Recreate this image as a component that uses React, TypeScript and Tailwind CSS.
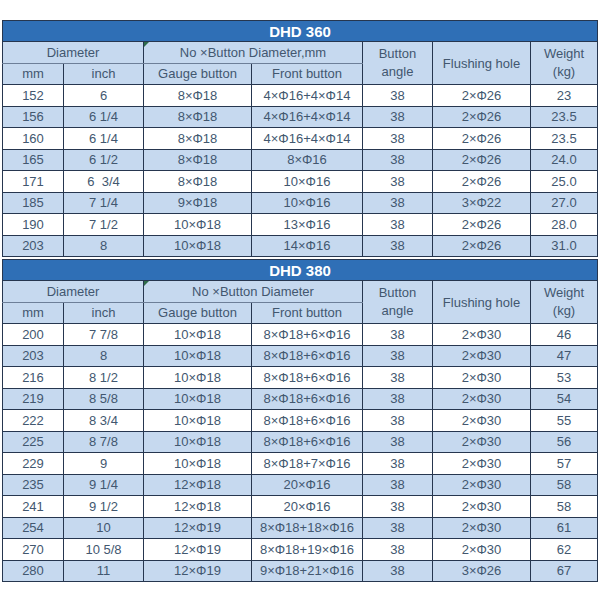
import React from "react";

type Row = [string, string, string, string, string, string, string];

const DHD360: Row[] = [
  ["152", "6", "8×Φ18", "4×Φ16+4×Φ14", "38", "2×Φ26", "23"],
  ["156", "6 1/4", "8×Φ18", "4×Φ16+4×Φ14", "38", "2×Φ26", "23.5"],
  ["160", "6 1/4", "8×Φ18", "4×Φ16+4×Φ14", "38", "2×Φ26", "23.5"],
  ["165", "6 1/2", "8×Φ18", "8×Φ16", "38", "2×Φ26", "24.0"],
  ["171", "6  3/4", "8×Φ18", "10×Φ16", "38", "2×Φ26", "25.0"],
  ["185", "7 1/4", "9×Φ18", "10×Φ16", "38", "3×Φ22", "27.0"],
  ["190", "7 1/2", "10×Φ18", "13×Φ16", "38", "2×Φ26", "28.0"],
  ["203", "8", "10×Φ18", "14×Φ16", "38", "2×Φ26", "31.0"],
];

const DHD380: Row[] = [
  ["200", "7 7/8", "10×Φ18", "8×Φ18+6×Φ16", "38", "2×Φ30", "46"],
  ["203", "8", "10×Φ18", "8×Φ18+6×Φ16", "38", "2×Φ30", "47"],
  ["216", "8 1/2", "10×Φ18", "8×Φ18+6×Φ16", "38", "2×Φ30", "53"],
  ["219", "8 5/8", "10×Φ18", "8×Φ18+6×Φ16", "38", "2×Φ30", "54"],
  ["222", "8 3/4", "10×Φ18", "8×Φ18+6×Φ16", "38", "2×Φ30", "55"],
  ["225", "8 7/8", "10×Φ18", "8×Φ18+6×Φ16", "38", "2×Φ30", "56"],
  ["229", "9", "10×Φ18", "8×Φ18+7×Φ16", "38", "2×Φ30", "57"],
  ["235", "9 1/4", "12×Φ18", "20×Φ16", "38", "2×Φ30", "58"],
  ["241", "9 1/2", "12×Φ18", "20×Φ16", "38", "2×Φ30", "58"],
  ["254", "10", "12×Φ19", "8×Φ18+18×Φ16", "38", "2×Φ30", "61"],
  ["270", "10 5/8", "12×Φ19", "8×Φ18+19×Φ16", "38", "2×Φ30", "62"],
  ["280", "11", "12×Φ19", "9×Φ18+21×Φ16", "38", "3×Φ26", "67"],
];

const WIDTHS = ["w-[61px]", "w-[80px]", "w-[108px]", "w-[111px]", "w-[70px]", "w-[98px]", "w-[67px]"];

const base = "border border-[#26364f] text-center align-middle p-0";
const cell = `${base} leading-none`;

const TwoLine = ({ a, b }: { a: string; b: string }) => (
  <td rowSpan={2} className={base}>
    <span className="block leading-[18px]">{a}</span>
    <span className="block leading-[18px]">{b}</span>
  </td>
);

const SpecTable = ({ title, subtitle, rows }: { title: string; subtitle: string; rows: Row[] }) => (
  <table className="table-fixed border-collapse w-[595px] text-[13px] text-[#42576f]">
    <colgroup>
      {WIDTHS.map((w, i) => (
        <col key={i} className={w} />
      ))}
    </colgroup>
    <tbody>
      <tr className="h-[21px]">
        <td
          colSpan={7}
          className="border border-[#26364f] bg-[#2f6fb6] text-center align-middle p-0 font-bold text-[15px] text-white leading-none"
        >
          {title}
        </td>
      </tr>
      <tr className="h-[21.5px] bg-[#c6d9ef]">
        <td colSpan={2} className={`${cell} border-b-[#6d7f98]`}>
          Diameter
        </td>
        <td colSpan={2} className={`${cell} relative border-b-[#6d7f98]`}>
          <span className="absolute left-0 top-0 h-0 w-0 border-l-[5px] border-b-[5px] border-l-[#2f6b4a] border-b-transparent" />
          {subtitle}
        </td>
        <TwoLine a="Button" b="angle" />
        <td rowSpan={2} className={cell}>
          Flushing hole
        </td>
        <TwoLine a="Weight" b="(kg)" />
      </tr>
      <tr className="h-[21.5px] bg-[#c6d9ef]">
        <td className={cell}>mm</td>
        <td className={cell}>inch</td>
        <td className={cell}>Gauge button</td>
        <td className={cell}>Front button</td>
      </tr>
      {rows.map((r, i) => (
        <tr key={i} className={`h-[21.5px] ${i % 2 === 1 ? "bg-[#c6d9ef]" : "bg-white"}`}>
          {r.map((v, j) => (
            <td key={j} className={`${cell} whitespace-pre`}>
              {v}
            </td>
          ))}
        </tr>
      ))}
    </tbody>
  </table>
);

export default function App() {
  return (
    <div className="w-[600px] h-[600px] bg-white pt-[20px] pl-[2px] font-['Liberation_Sans',Arial,sans-serif]">
      <SpecTable title="DHD 360" subtitle="No ×Button Diameter,mm" rows={DHD360} />
      <div className="h-[2px]" />
      <SpecTable title="DHD 380" subtitle="No ×Button Diameter" rows={DHD380} />
    </div>
  );
}
